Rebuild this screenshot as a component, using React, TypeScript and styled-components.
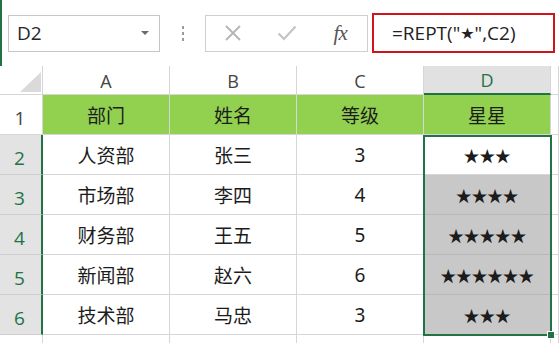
import React from "react";
import styled, { createGlobalStyle } from "styled-components";

const Global = createGlobalStyle`
  html, body { margin: 0; padding: 0; background: #fff; }
  body { font-family: "Noto Sans", "Noto Sans CJK SC", sans-serif; }
`;

const GREEN = "#217346";
const GRID = "#D6D6D6";

const Root = styled.div`
  width: 559px;
  height: 343px;
  overflow: hidden;
  background: #fff;
  display: flex;
  flex-direction: column;
`;

const Toolbar = styled.div`
  height: 66px;
  flex: none;
  display: flex;
  align-items: center;
  box-sizing: border-box;
  padding-left: 6px;
  border-left: 2px solid ${GREEN};
`;

const NameBox = styled.div`
  width: 152px;
  height: 37px;
  box-sizing: border-box;
  border: 1px solid #C6C6C6;
  display: flex;
  align-items: center;
  justify-content: space-between;
  padding: 0 10px 0 8px;
  font-family: "Open Sans", "Noto Sans", sans-serif;
  font-size: 19px;
  color: #262626;
`;

const Caret = styled.span`
  width: 0;
  height: 0;
  border-left: 4px solid transparent;
  border-right: 4px solid transparent;
  border-top: 4px solid #6a6a6a;
`;

const Separator = styled.div`
  width: 45px;
  display: flex;
  flex-direction: column;
  align-items: center;
  gap: 3px;
`;

const Dot = styled.span`
  width: 2px;
  height: 3px;
  background: #9a9a9a;
`;

const FxBox = styled.div`
  width: 163px;
  height: 37px;
  box-sizing: border-box;
  border: 1px solid #CFCFCF;
  display: flex;
`;

const FxSlot = styled.div`
  width: 54px;
  display: flex;
  align-items: center;
  justify-content: center;
`;

const FxText = styled.span`
  font-family: "Liberation Serif", "DejaVu Serif", serif;
  font-style: italic;
  font-size: 21px;
  color: #555;
  letter-spacing: -1px;
`;

const FormulaInput = styled.div`
  margin-left: 4px;
  width: 183px;
  height: 40px;
  box-sizing: border-box;
  border: 2px solid #D1131D;
  display: flex;
  align-items: center;
  padding-left: 18px;
  font-family: "Open Sans", "Noto Sans", "DejaVu Sans", sans-serif;
  font-size: 19px;
  color: #222;
  white-space: nowrap;
`;

const SmallStar = styled.span`
  font-family: "DejaVu Sans", sans-serif;
  font-size: 16px;
`;

const Sheet = styled.div`
  position: relative;
  display: grid;
  grid-template-columns: 43px 127px 127px 127px 127px 1fr;
  grid-template-rows: 29px repeat(7, 40px);
`;

const Corner = styled.div`
  border-right: 1px solid ${GRID};
  border-bottom: 1px solid ${GRID};
  display: flex;
  align-items: flex-end;
  justify-content: flex-end;
  padding: 0 1px 2px 0;
`;

const Triangle = styled.span`
  width: 0;
  height: 0;
  border-left: 21px solid transparent;
  border-bottom: 20px solid #DADADA;
`;

const ColHead = styled.div<{ $sel?: boolean }>`
  box-sizing: border-box;
  border-right: 1px solid ${GRID};
  border-bottom: ${(p) => (p.$sel ? `2px solid ${GREEN}` : `1px solid ${GRID}`)};
  background: ${(p) => (p.$sel ? "#E1E1E1" : "#fff")};
  color: ${(p) => (p.$sel ? GREEN : "#444")};
  font-family: "Open Sans", "Noto Sans", sans-serif;
  font-size: 18px;
  display: flex;
  align-items: center;
  justify-content: center;
  padding-top: 1px;
`;

const RowHead = styled.div<{ $sel?: boolean }>`
  box-sizing: border-box;
  border-right: ${(p) => (p.$sel ? `2px solid ${GREEN}` : `1px solid ${GRID}`)};
  border-bottom: 1px solid ${(p) => (p.$sel ? "#CFCFCF" : GRID)};
  background: ${(p) => (p.$sel ? "#E3E3E3" : "#fff")};
  color: ${(p) => (p.$sel ? GREEN : "#444")};
  font-family: "Open Sans", "Noto Sans", sans-serif;
  font-size: 19px;
  display: flex;
  align-items: flex-end;
  justify-content: center;
  padding: 0 2px 3px 0;
`;

const Cell = styled.div<{ $fill?: string; $stars?: boolean }>`
  box-sizing: border-box;
  border-right: 1px solid ${GRID};
  border-bottom: 1px solid ${(p) => (p.$fill === "#C8C8C8" ? "#B8B8B8" : GRID)};
  background: ${(p) => p.$fill || "#fff"};
  color: #1c1c1c;
  font-family: ${(p) =>
    p.$stars
      ? `"Noto Sans CJK SC", "DejaVu Sans", sans-serif`
      : `"Noto Sans", "Noto Sans CJK SC", sans-serif`};
  font-size: ${(p) => (p.$stars ? "16px" : "19px")};
  letter-spacing: ${(p) => (p.$stars ? "-0.4px" : "0")};
  display: flex;
  align-items: center;
  justify-content: center;
  white-space: nowrap;
`;

const Selection = styled.div`
  position: absolute;
  left: 423px;
  top: 69px;
  width: 129px;
  height: 201px;
  box-sizing: border-box;
  border: 2px solid ${GREEN};
  pointer-events: none;
`;

const Handle = styled.span`
  position: absolute;
  right: -5px;
  bottom: -5px;
  width: 6px;
  height: 6px;
  background: ${GREEN};
  border: 1px solid #fff;
`;

const XIcon = () => (
  <svg width="18" height="18" viewBox="0 0 18 18">
    <path d="M2 2 L16 16 M16 2 L2 16" stroke="#B4B4B4" strokeWidth="1.8" fill="none" />
  </svg>
);

const CheckIcon = () => (
  <svg width="20" height="16" viewBox="0 0 20 16">
    <path d="M1.5 8.5 L7 14 L18.5 1.5" stroke="#C4C4C4" strokeWidth="2.2" fill="none" />
  </svg>
);

const rows = [
  { dept: "人资部", name: "张三", level: "3" },
  { dept: "市场部", name: "李四", level: "4" },
  { dept: "财务部", name: "王五", level: "5" },
  { dept: "新闻部", name: "赵六", level: "6" },
  { dept: "技术部", name: "马忠", level: "3" },
];

export default function App() {
  return (
    <Root>
      <Global />
      <Toolbar>
        <NameBox>
          <span>D2</span>
          <Caret />
        </NameBox>
        <Separator>
          <Dot />
          <Dot />
          <Dot />
        </Separator>
        <FxBox>
          <FxSlot>
            <XIcon />
          </FxSlot>
          <FxSlot>
            <CheckIcon />
          </FxSlot>
          <FxSlot>
            <FxText>fx</FxText>
          </FxSlot>
        </FxBox>
        <FormulaInput>
          =REPT("<SmallStar>★</SmallStar>",C2)
        </FormulaInput>
      </Toolbar>
      <Sheet>
        <Corner>
          <Triangle />
        </Corner>
        <ColHead>A</ColHead>
        <ColHead>B</ColHead>
        <ColHead>C</ColHead>
        <ColHead $sel>D</ColHead>
        <ColHead />

        <RowHead>1</RowHead>
        <Cell $fill="#92D050">部门</Cell>
        <Cell $fill="#92D050">姓名</Cell>
        <Cell $fill="#92D050">等级</Cell>
        <Cell $fill="#92D050">星星</Cell>
        <Cell />

        {rows.map((r, i) => (
          <React.Fragment key={i}>
            <RowHead $sel>{i + 2}</RowHead>
            <Cell>{r.dept}</Cell>
            <Cell>{r.name}</Cell>
            <Cell>{r.level}</Cell>
            <Cell $stars $fill={i === 0 ? "#fff" : "#C8C8C8"}>
              {"★".repeat(Number(r.level))}
            </Cell>
            <Cell />
          </React.Fragment>
        ))}

        <RowHead />
        <Cell />
        <Cell />
        <Cell />
        <Cell />
        <Cell />

        <Selection>
          <Handle />
        </Selection>
      </Sheet>
    </Root>
  );
}
